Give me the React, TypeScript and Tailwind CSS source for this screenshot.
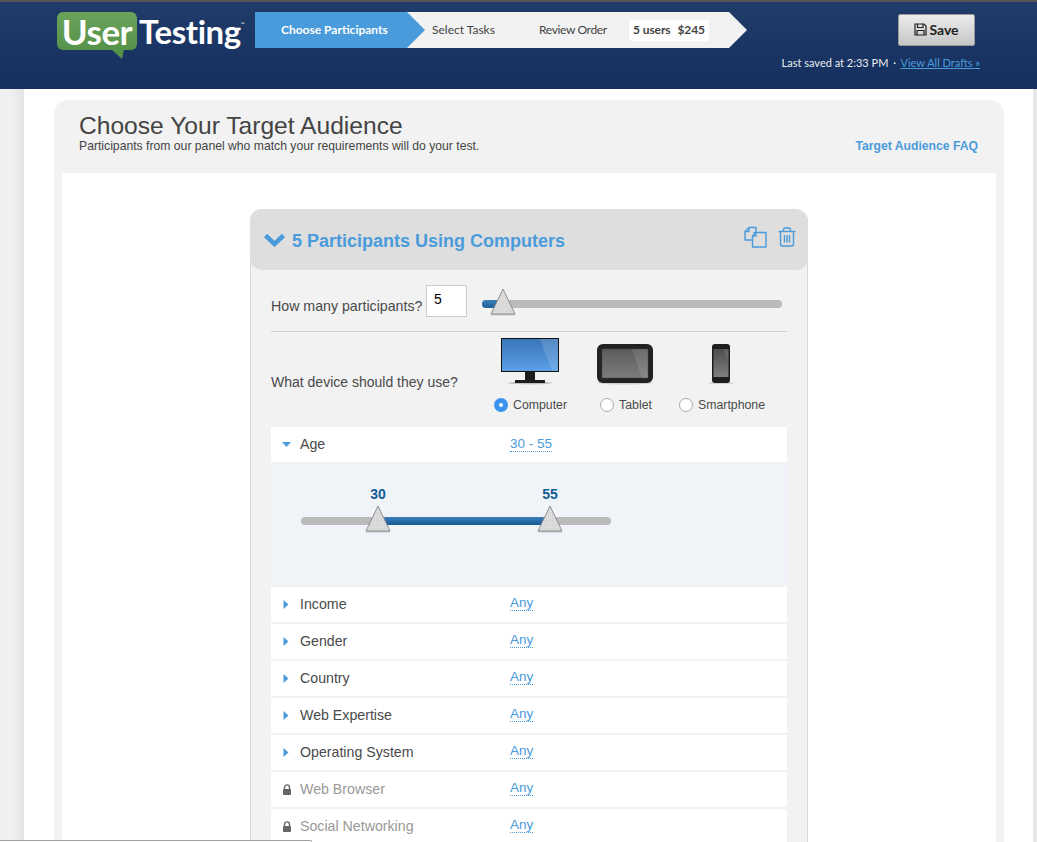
import { FC } from "react";

const blue = "#4a9bdb";

const Thumb: FC<{ className: string }> = ({ className }) => (
  <svg className={`absolute ${className}`} width="28" height="30" viewBox="0 0 28 30">
    <defs>
      <pattern id="dots" width="2" height="2" patternUnits="userSpaceOnUse">
        <rect width="2" height="2" fill="#dedede" />
        <rect width="1" height="1" fill="#cdcdcd" />
      </pattern>
    </defs>
    <path d="M14 2 L26.5 27.5 H1.5 Z" fill="#000" opacity="0.18" transform="translate(0 1)" />
    <path d="M14 2 L26 27 H2 Z" fill="url(#dots)" stroke="#8f8f8f" strokeWidth="1" strokeLinejoin="round" />
  </svg>
);

const Monitor = () => (
  <svg width="60" height="48" viewBox="0 0 60 48">
    <defs>
      <linearGradient id="screen" x1="0" y1="0" x2="0" y2="1">
        <stop offset="0" stopColor="#3a76ba" />
        <stop offset="1" stopColor="#5a9fe6" />
      </linearGradient>
    </defs>
    <ellipse cx="30" cy="46" rx="22" ry="1.5" fill="#000" opacity="0.2" />
    <rect x="1" y="1" width="58" height="34" fill="#111" />
    <rect x="2" y="2" width="56" height="32" fill="url(#screen)" />
    <path d="M40 2 H58 V34 H52 Z" fill="#fff" opacity="0.14" />
    <rect x="25" y="35" width="10" height="9" fill="#1c1c1c" />
    <rect x="15" y="43" width="30" height="3" rx="0.5" fill="#1c1c1c" />
  </svg>
);

const Tablet = () => (
  <svg width="60" height="42" viewBox="0 0 60 42">
    <defs>
      <linearGradient id="tab" x1="0" y1="0" x2="0" y2="1">
        <stop offset="0" stopColor="#5c5c5c" />
        <stop offset="1" stopColor="#7c7c7c" />
      </linearGradient>
    </defs>
    <ellipse cx="30" cy="40" rx="28" ry="1.5" fill="#000" opacity="0.15" />
    <rect x="2" y="1" width="56" height="39" rx="6" fill="#222" />
    <rect x="7" y="6" width="46" height="29" fill="url(#tab)" stroke="#444" strokeWidth="0.5" />
    <path d="M37 6 H53 V35 H47 Z" fill="#fff" opacity="0.1" />
  </svg>
);

const Phone = () => (
  <svg width="30" height="42" viewBox="0 0 30 42">
    <defs>
      <linearGradient id="ph" x1="0" y1="0" x2="0" y2="1">
        <stop offset="0" stopColor="#4e4e4e" />
        <stop offset="1" stopColor="#7e7e7e" />
      </linearGradient>
    </defs>
    <ellipse cx="15" cy="40" rx="13" ry="1.2" fill="#000" opacity="0.14" />
    <rect x="6" y="1" width="18" height="39" rx="3" fill="#1e1e1e" />
    <rect x="7.5" y="6" width="15" height="28" fill="url(#ph)" />
    <path d="M17 6 H22.5 V18 Z" fill="#fff" opacity="0.1" />
  </svg>
);

const Radio: FC<{ label: string; checked?: boolean }> = ({ label, checked }) => (
  <div className="ml-[2px] flex items-center gap-[5px] text-[12.3px] text-[#4a4a4a]">
    {checked ? (
      <span className="w-[14px] h-[14px] rounded-full bg-[#3b93f0] flex items-center justify-center">
        <span className="w-[4px] h-[4px] rounded-full bg-white" />
      </span>
    ) : (
      <span className="w-[14px] h-[14px] rounded-full bg-white border border-[#aaa]" />
    )}
    {label}
  </div>
);

const Row: FC<{ label: string; value?: string; locked?: boolean }> = ({ label, value = "Any", locked }) => (
  <div className="h-[35px] bg-white flex items-center shrink-0">
    <div className="w-[29px] pl-[11px] flex items-center">
      {locked ? (
        <svg width="10" height="11" viewBox="0 0 10 11">
          <path d="M2.5 5 V3.4 A2.5 2.5 0 0 1 7.5 3.4 V5" fill="none" stroke="#666" strokeWidth="1.4" />
          <rect x="1" y="5" width="8" height="6" rx="0.8" fill="#666" />
        </svg>
      ) : (
        <svg width="6" height="9" viewBox="0 0 6 9" className="ml-[1px]">
          <path d="M0.5 0 L5.5 4.5 L0.5 9 Z" fill={blue} />
        </svg>
      )}
    </div>
    <div className={`w-[210px] text-[14.2px] ${locked ? "text-[#999]" : "text-[#4a4a4a]"}`}>{label}</div>
    <div className="text-[13.5px] text-[#4a9bdb] leading-[15px] border-b border-dotted border-[#4a9bdb] -mt-[3px]">{value}</div>
  </div>
);

const App: FC = () => {
  return (
    <div className="relative h-[842px] w-[1037px] overflow-hidden bg-white font-['Liberation_Sans',Arial,sans-serif]">
      <header className="h-[89px] border-t-2 border-[#555] bg-gradient-to-b from-[#203c69] to-[#152f5f] flex font-['Lato',sans-serif]">
        <div className="w-[255px] pl-[57px] pt-[10px] shrink-0 flex items-start">
          <div className="relative w-[80px] h-[38px] bg-gradient-to-b from-[#6ba35c] to-[#55924a] rounded-[6px] flex items-center justify-center text-white text-[35px] font-bold leading-none tracking-[-0.5px] shrink-0">
            User
            <svg className="absolute left-[54px] top-[37px]" width="13" height="10" viewBox="0 0 13 10">
              <path d="M0 0 H13 L11 10 Z" fill="#55924a" />
            </svg>
          </div>
          <div className="ml-[2px] text-white text-[33px] font-bold leading-[38px] tracking-[-0.4px]">Testing</div>
          <span className="text-white text-[5px] mt-[9px]">™</span>
        </div>
        <nav className="pt-[10px] flex items-start h-[46px] text-[12px] text-[#444]">
          <div className="w-[152px] h-[36px] bg-[#4a9bdb] flex items-center pl-[26px] text-white font-bold">Choose Participants</div>
          <div className="h-[36px] bg-[#f2f2f2]">
            <div className="w-0 h-0 border-y-[18px] border-l-[18px] border-y-transparent border-l-[#4a9bdb]" />
          </div>
          <div className="w-[304px] h-[36px] bg-[#f2f2f2] flex items-center pl-[7px]">
            <span className="w-[107px]">Select Tasks</span>
            <span className="w-[90px] tracking-[-0.35px]">Review Order</span>
            <span className="w-[80px] h-[21px] rounded-[2px] bg-white font-bold tracking-[-0.1px] flex items-center justify-center gap-[7px]">
              <span>5 users</span>
              <span>$245</span>
            </span>
          </div>
          <div className="w-0 h-0 border-y-[18px] border-l-[18px] border-y-transparent border-l-[#f2f2f2]" />
        </nav>
        <div className="flex-1 flex flex-col items-end pr-[57px] pt-[12px]">
          <button className="w-[77px] h-[32px] mr-[5px] pb-[2px] rounded-[2px] border border-[#999] bg-gradient-to-b from-[#ececec] to-[#c6c6c6] flex items-center justify-center gap-[2px] text-[14px] font-bold text-[#222]">
            <svg width="13" height="13" viewBox="0 0 13 13" fill="none" stroke="#222" strokeWidth="1.2">
              <path d="M1 1 H10 L12 3 V12 H1 Z" />
              <path d="M3.5 1 V4.5 H9 V1" />
              <path d="M3 12 V7.5 H10 V12" />
            </svg>
            Save
          </button>
          <div className="mt-[10px] text-[11px] leading-[14px] text-[#e8edf3] whitespace-nowrap">
            Last saved at 2:33 PM <span className="mx-[2px]">·</span>{" "}
            <span className="text-[#4a9bdb] underline">View All Drafts »</span>
          </div>
        </div>
      </header>

      <div className="flex h-[753px]">
        <div className="w-[24px] shrink-0 bg-gradient-to-r from-[#f0f0f0] via-[#f0f0f0] to-[#e4e4e4]" />
        <main className="w-[1009px] shrink-0 pl-[30px] pr-[29px] pt-[11px]">
          <div className="h-[800px] rounded-t-[14px] bg-[#f2f2f2] px-[8px]">
            <div className="h-[73px] pl-[17px] pr-[18px] pt-[13px] flex justify-between">
              <div className="text-[#444]">
                <h1 className="text-[24.6px] leading-[26px]">Choose Your Target Audience</h1>
                <p className="text-[12.2px] leading-[14px]">Participants from our panel who match your requirements will do your test.</p>
              </div>
              <a className="text-[12.2px] font-bold text-[#4a9bdb] mt-[24px]">Target Audience FAQ</a>
            </div>
            <div className="h-[800px] bg-white pt-[36px] pl-[188px]">
              <section className="w-[558px] rounded-t-[12px] bg-[#f2f2f2] border-x border-[#d8d8d8]">
                <div className="-mx-[1px] h-[61px] bg-[#dedede] rounded-[12px] rounded-tr-[14px] flex items-center pl-[13px] pr-[12px] text-[#4a9bdb]">
                  <svg width="23" height="14" viewBox="0 0 23 14" className="mr-[6px]">
                    <path d="M2.5 2.5 L11.5 11 L20.5 2.5" fill="none" stroke={blue} strokeWidth="4.5" />
                  </svg>
                  <h2 className="flex-1 text-[18px] font-bold pt-[4px]">5 Participants Using Computers</h2>
                  <div className="flex items-center gap-[10px] -mt-[5px]">
                    <svg width="24" height="22" viewBox="0 0 24 22" fill="none" stroke={blue} strokeWidth="1.4" strokeLinejoin="round">
                      <path d="M8 14 H1 V5.5 L5 1.5 H12 V6" />
                      <path d="M5 1.5 V5.5 H1" />
                      <path d="M10 6.5 H22 V21 H8.5 V10 L12 6.5 Z" fill="#dedede" />
                      <path d="M12 6.5 V10 H8.5" />
                    </svg>
                    <svg width="18" height="20" viewBox="0 0 18 20" fill="none" stroke={blue} strokeWidth="1.4" strokeLinejoin="round">
                      <path d="M0.5 4.5 H17.5" />
                      <path d="M5.5 4.5 V2.5 Q5.5 1 7 1 H11 Q12.5 1 12.5 2.5 V4.5" />
                      <path d="M2.5 4.5 V17 Q2.5 19 4.5 19 H13.5 Q15.5 19 15.5 17 V4.5" />
                      <path d="M6.5 8 V15.5 M9 8 V15.5 M11.5 8 V15.5" />
                    </svg>
                  </div>
                </div>

                <div className="pl-[20px] pr-[20px]">
                  <div className="h-[62px] border-b border-[#cfcfcf] flex items-start text-[14.2px] text-[#4a4a4a]">
                    <span className="mt-[28px] leading-[16px] w-[155px] whitespace-nowrap">How many participants?</span>
                    <input
                      readOnly
                      value="5"
                      className="mt-[15px] w-[41px] h-[32px] bg-white border border-[#ccc] pl-[7px] pb-[4px] text-[14px] text-black outline-none"
                    />
                    <div className="relative mt-[30px] ml-[15px] w-[300px] h-[8px] rounded-full bg-[#bbb]">
                      <div className="w-[20px] h-[8px] rounded-l-full bg-gradient-to-b from-[#3b80bb] to-[#1d5f98]" />
                      <Thumb className="left-[7px] -top-[13px]" />
                    </div>
                  </div>

                  <div className="h-[95px] flex">
                    <div className="w-[211px] pt-[42px] text-[14px] leading-[16px] text-[#4a4a4a]">What device should they use?</div>
                    <div className="w-[95px] pt-[5px] flex flex-col items-center">
                      <div className="h-[46px]"><Monitor /></div>
                      <div className="mt-[13px]"><Radio label="Computer" checked /></div>
                    </div>
                    <div className="w-[96px] pt-[5px] flex flex-col items-center">
                      <div className="h-[46px] pt-[6px]"><Tablet /></div>
                      <div className="mt-[13px]"><Radio label="Tablet" /></div>
                    </div>
                    <div className="w-[96px] pt-[5px] flex flex-col items-center">
                      <div className="h-[46px] pt-[6px]"><Phone /></div>
                      <div className="mt-[13px]"><Radio label="Smartphone" /></div>
                    </div>
                  </div>

                  <div className="flex flex-col gap-[2px]">
                    <div className="shrink-0">
                      <div className="h-[35px] bg-white flex items-center">
                        <div className="w-[29px] pl-[11px]">
                          <svg width="9" height="5" viewBox="0 0 9 5" className="block"><path d="M0 0 H9 L4.5 5 Z" fill={blue} /></svg>
                        </div>
                        <div className="w-[210px] text-[14.2px] text-[#4a4a4a]">Age</div>
                        <div className="text-[13.5px] text-[#4a9bdb] leading-[15px] border-b border-dotted border-[#4a9bdb] -mt-[1px]">30 - 55</div>
                      </div>
                      <div className="h-[123px] bg-[#f0f4f8] pl-[30px] pt-[55px]">
                        <div className="relative w-[310px] h-[8px] rounded-full bg-[#bbb]">
                          <div className="ml-[77px] w-[172px] h-[8px] bg-gradient-to-b from-[#3b80bb] to-[#155a94]" />
                          <span className="absolute left-[77px] -translate-x-1/2 -top-[30px] text-[14px] font-bold leading-[14px] text-[#0f5c96]">30</span>
                          <span className="absolute left-[249px] -translate-x-1/2 -top-[30px] text-[14px] font-bold leading-[14px] text-[#0f5c96]">55</span>
                          <Thumb className="left-[63px] -top-[13px]" />
                          <Thumb className="left-[235px] -top-[13px]" />
                        </div>
                      </div>
                    </div>
                    <Row label="Income" />
                    <Row label="Gender" />
                    <Row label="Country" />
                    <Row label="Web Expertise" />
                    <Row label="Operating System" />
                    <Row label="Web Browser" locked />
                    <Row label="Social Networking" locked />
                  </div>
                </div>
              </section>
            </div>
          </div>
        </main>
        <div className="flex-1 bg-[#e6e6e6]" />
      </div>

      <div className="absolute left-0 bottom-0 w-[312px] h-[2px] bg-white border-t border-r border-[#a0a0a0] rounded-tr-[2px]" />
    </div>
  );
};

export default App;
